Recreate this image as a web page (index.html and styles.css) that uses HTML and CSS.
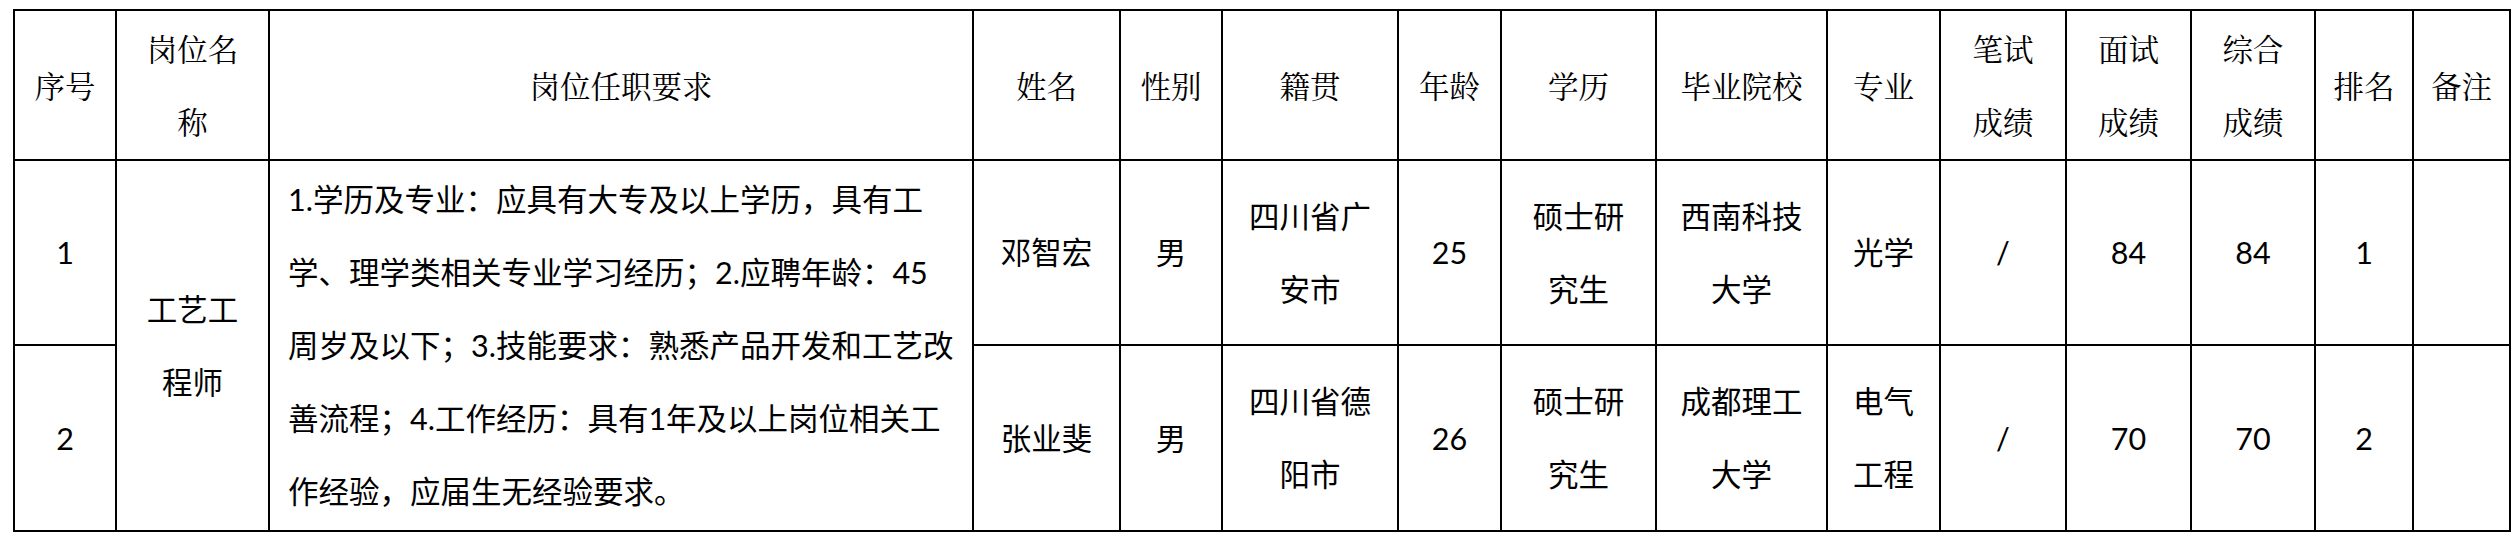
FILE: index.html
```html
<!DOCTYPE html>
<html lang="zh-CN">
<head>
<meta charset="utf-8">
<title>拟录用人员名单</title>
<link rel="stylesheet" href="styles.css">
</head>
<body>
<table class="grid">
  <colgroup>
    <col class="c1"><col class="c2"><col class="c3"><col class="c4"><col class="c5">
    <col class="c6"><col class="c7"><col class="c8"><col class="c9"><col class="c10">
    <col class="c11"><col class="c12"><col class="c13"><col class="c14"><col class="c15">
  </colgroup>
  <thead>
    <tr class="r-head">
      <th>序号</th>
      <th>岗位名<br>称</th>
      <th>岗位任职要求</th>
      <th>姓名</th>
      <th>性别</th>
      <th>籍贯</th>
      <th>年龄</th>
      <th>学历</th>
      <th>毕业院校</th>
      <th>专业</th>
      <th>笔试<br>成绩</th>
      <th>面试<br>成绩</th>
      <th>综合<br>成绩</th>
      <th>排名</th>
      <th>备注</th>
    </tr>
  </thead>
  <tbody>
    <tr class="r-one">
      <td>1</td>
      <td rowspan="2">工艺工<br>程师</td>
      <td rowspan="2" class="req">1.学历及专业：应具有大专及以上学历，具有工<br>学、理学类相关专业学习经历；2.应聘年龄：45<br>周岁及以下；3.技能要求：熟悉产品开发和工艺改<br>善流程；4.工作经历：具有1年及以上岗位相关工<br>作经验，应届生无经验要求。</td>
      <td>邓智宏</td>
      <td>男</td>
      <td>四川省广<br>安市</td>
      <td>25</td>
      <td>硕士研<br>究生</td>
      <td>西南科技<br>大学</td>
      <td>光学</td>
      <td>/</td>
      <td>84</td>
      <td>84</td>
      <td>1</td>
      <td></td>
    </tr>
    <tr class="r-two">
      <td>2</td>
      <td>张业斐</td>
      <td>男</td>
      <td>四川省德<br>阳市</td>
      <td>26</td>
      <td>硕士研<br>究生</td>
      <td>成都理工<br>大学</td>
      <td>电气<br>工程</td>
      <td>/</td>
      <td>70</td>
      <td>70</td>
      <td>2</td>
      <td></td>
    </tr>
  </tbody>
</table>
</body>
</html>
```

FILE: styles.css
```css
html, body {
  margin: 0;
  padding: 0;
  background: #ffffff;
}

body {
  padding: 9px 0 0 13px;
}

.grid {
  border-collapse: collapse;
  table-layout: fixed;
  width: 2498px;
  color: #000000;
  font-size: 30.5px;
  line-height: 73px;
}

.c1 { width: 102px; }
.c2 { width: 153px; }
.c3 { width: 704px; }
.c4 { width: 147px; }
.c5 { width: 102px; }
.c6 { width: 176px; }
.c7 { width: 103px; }
.c8 { width: 155px; }
.c9 { width: 171px; }
.c10 { width: 113px; }
.c11 { width: 126px; }
.c12 { width: 125px; }
.c13 { width: 124px; }
.c14 { width: 98px; }
.c15 { width: 97px; }

.grid th,
.grid td {
  border: 2px solid #000000;
  padding: 0;
  text-align: center;
  vertical-align: middle;
  white-space: nowrap;
  overflow: hidden;
}

.grid th {
  font-family: "Noto Serif CJK SC", "Source Han Serif SC", "AR PL UMing CN", "Noto Sans CJK SC", serif;
  font-weight: 400;
}

.grid td {
  font-family: Lato, "Noto Sans CJK SC", sans-serif;
  font-weight: 400;
}

.r-head { height: 150px; }
.r-one { height: 185px; }
.r-two { height: 186px; }

.grid td.req {
  text-align: left;
  padding-left: 18px;
}
```
